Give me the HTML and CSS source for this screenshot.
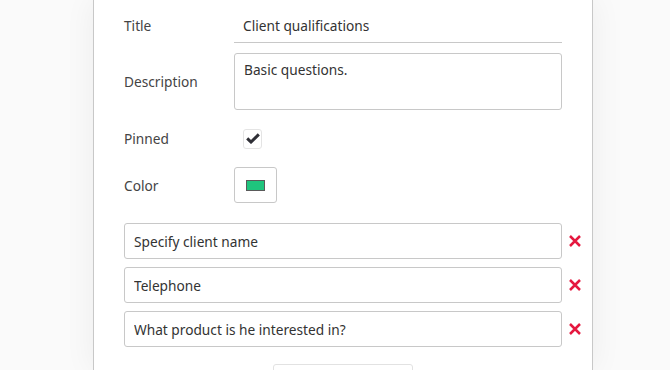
FILE: index.html
```html
<!DOCTYPE html>
<html lang="en">
<head>
  <meta charset="UTF-8">
  <title>Edit script</title>
  <link rel="stylesheet" href="styles.css">
</head>
<body>
  <div class="page">
    <div class="panel">
      <div class="row row-title">
        <label class="label">Title</label>
        <input class="title-input" type="text" value="Client qualifications">
      </div>
      <div class="row row-desc">
        <label class="label">Description</label>
        <textarea class="desc-input">Basic questions.</textarea>
      </div>
      <div class="row row-pinned">
        <label class="label">Pinned</label>
        <span class="checkbox">
          <svg width="14" height="11" viewBox="0 0 14 11"><path d="M1.2 5.4 L5 9 L12.8 1.4" fill="none" stroke="#2f2f36" stroke-width="3"/></svg>
        </span>
      </div>
      <div class="row row-color">
        <label class="label">Color</label>
        <button class="color-btn"><span class="swatch"></span></button>
      </div>

      <div class="questions">
        <div class="question">
          <input class="question-input" type="text" value="Specify client name">
          <span class="remove"><svg width="12" height="12" viewBox="0 0 12 12"><path d="M1 1 L11 11 M11 1 L1 11" stroke="#e5183f" stroke-width="2.5"/></svg></span>
        </div>
        <div class="question">
          <input class="question-input" type="text" value="Telephone">
          <span class="remove"><svg width="12" height="12" viewBox="0 0 12 12"><path d="M1 1 L11 11 M11 1 L1 11" stroke="#e5183f" stroke-width="2.5"/></svg></span>
        </div>
        <div class="question">
          <input class="question-input" type="text" value="What product is he interested in?">
          <span class="remove"><svg width="12" height="12" viewBox="0 0 12 12"><path d="M1 1 L11 11 M11 1 L1 11" stroke="#e5183f" stroke-width="2.5"/></svg></span>
        </div>
      </div>

      <div class="add-row">
        <button class="add-btn"></button>
      </div>
    </div>
  </div>
</body>
</html>
```

FILE: styles.css
```css
body {
    margin: 0;
    font-family: "Noto Sans", Arial, sans-serif;
    font-size: 13.7px;
    color: #333;
    background: #fafafa;
    height: 370px;
    overflow: hidden;
}
.page {
    display: flex;
    padding-left: 93px;
}
.panel {
    width: 468px;
    padding: 8px 0 0 30px;
    background: #fff;
    border-left: 1px solid #c8c8c8;
    border-right: 1px solid #c8c8c8;
    box-shadow: 0 0 30px rgba(0, 0, 0, 0.06);
    height: 362px;
    overflow: hidden;
}
.row {
    display: flex;
    align-items: center;
}
.label {
    width: 110px;
    color: #444;
}
input, textarea, button {
    font-family: inherit;
    font-size: 13.7px;
    color: #333;
    box-sizing: border-box;
}
.title-input {
    width: 328px;
    height: 35px;
    border: none;
    border-bottom: 1px solid #c8c8c8;
    padding: 0 9px;
    outline: none;
}
.row-desc {
    margin-top: 10px;
}
.desc-input {
    width: 328px;
    height: 57px;
    border: 1px solid #c8c8c8;
    border-radius: 3px;
    padding: 6px 9px;
    resize: none;
    outline: none;
}
.row-pinned {
    margin-top: 19px;
    height: 19px;
}
.checkbox {
    margin-left: 9px;
    width: 17px;
    height: 18px;
    border: 1px solid #e4e4e4;
    border-radius: 3px;
    display: flex;
    align-items: center;
    justify-content: center;
}
.row-color {
    margin-top: 19px;
}
.color-btn {
    width: 43px;
    height: 36px;
    background: #fff;
    border: 1px solid #c8c8c8;
    border-radius: 3px;
    padding: 0;
    display: flex;
    align-items: center;
    justify-content: center;
}
.swatch {
    width: 19px;
    height: 11px;
    background: #1fc47d;
    border: 1px solid #5a5a5a;
    box-sizing: border-box;
}
.questions {
    margin-top: 20px;
    display: flex;
    flex-direction: column;
    gap: 8px;
}
.question {
    display: flex;
    align-items: center;
}
.question-input {
    width: 438px;
    height: 36px;
    border: 1px solid #c8c8c8;
    border-radius: 3px;
    padding: 0 9px;
    outline: none;
}
.remove {
    margin-left: 7px;
    display: flex;
}
.add-row {
    display: flex;
    margin-top: 17px;
    padding-left: 149px;
}
.add-btn {
    width: 140px;
    height: 30px;
    background: #fff;
    border: 1px solid #e2e2e2;
    border-radius: 3px;
}
```
